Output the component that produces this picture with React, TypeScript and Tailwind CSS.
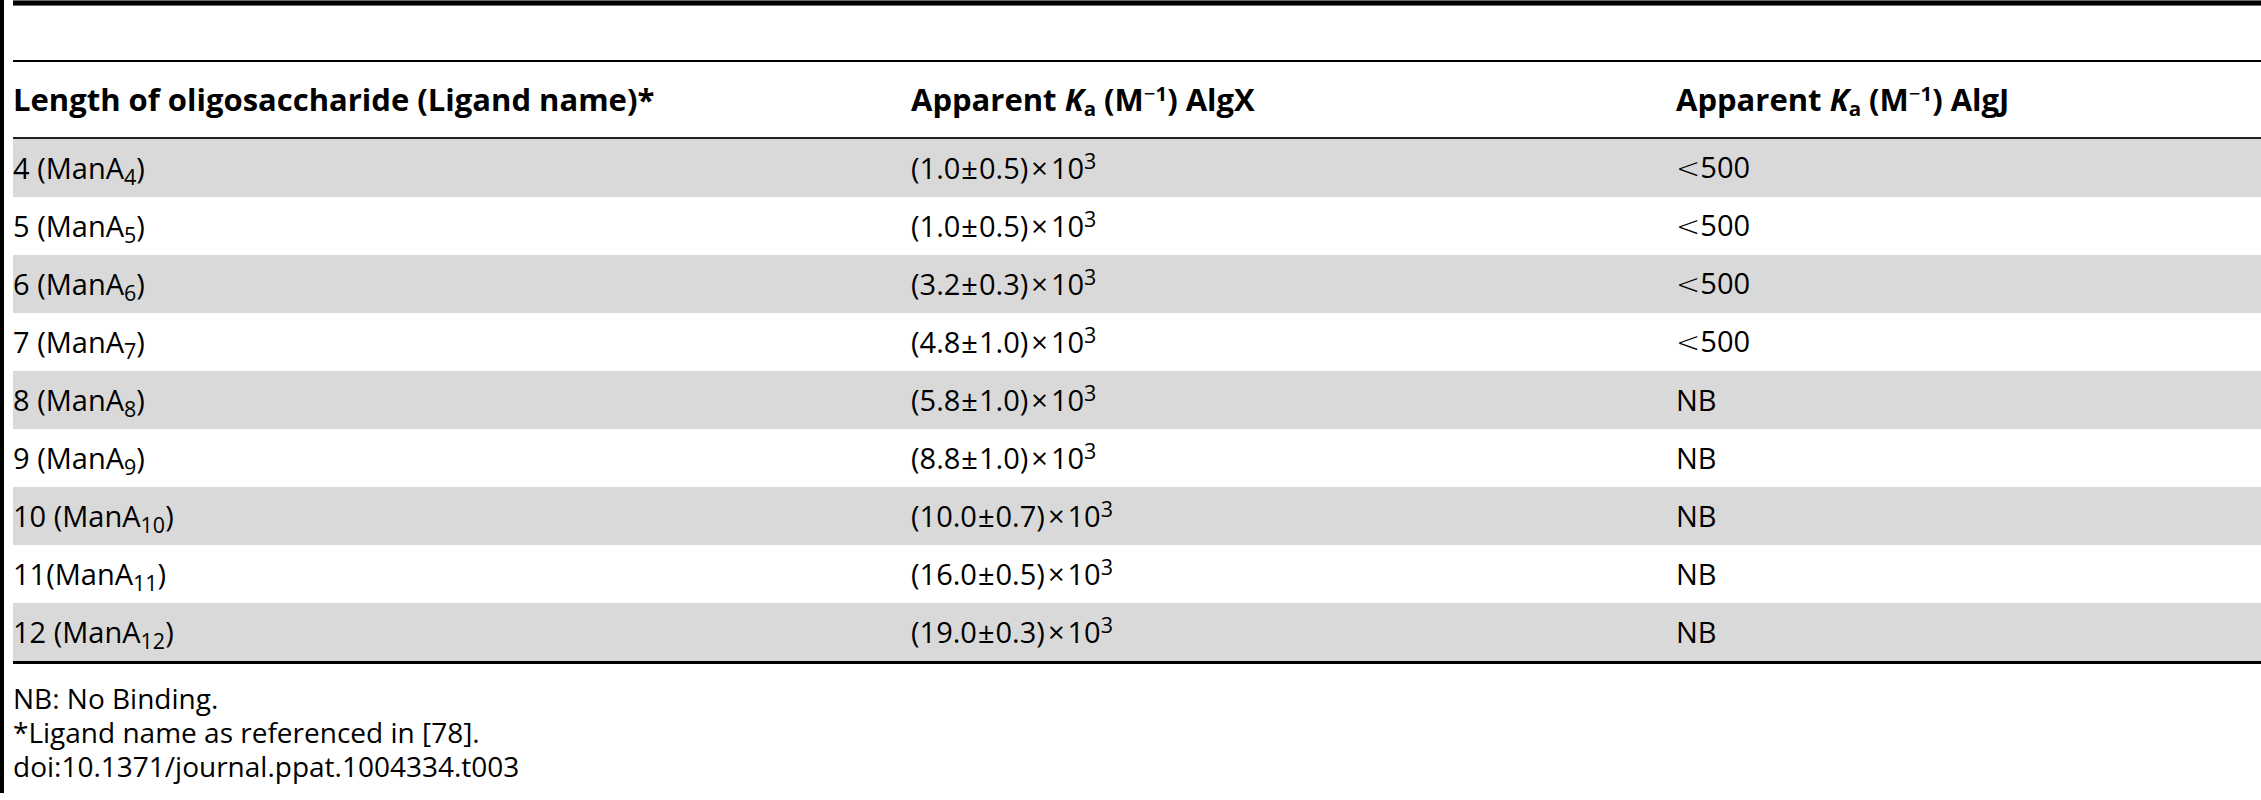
import React from "react";

// Tabela: wiązanie oligosacharydów przez AlgX / AlgJ
const ROWS = [
  { len: "4 ", sub: "4", algx: "1.0", err: "0.5", algj: "500" },
  { len: "5 ", sub: "5", algx: "1.0", err: "0.5", algj: "500" },
  { len: "6 ", sub: "6", algx: "3.2", err: "0.3", algj: "500" },
  { len: "7 ", sub: "7", algx: "4.8", err: "1.0", algj: "500" },
  { len: "8 ", sub: "8", algx: "5.8", err: "1.0", algj: "NB" },
  { len: "9 ", sub: "9", algx: "8.8", err: "1.0", algj: "NB" },
  { len: "10 ", sub: "10", algx: "10.0", err: "0.7", algj: "NB" },
  { len: "11", sub: "11", algx: "16.0", err: "0.5", algj: "NB" },
  { len: "12 ", sub: "12", algx: "19.0", err: "0.3", algj: "NB" },
];

const COLS = "grid grid-cols-[898px_765px_1fr] items-center";

function KaHeader({ enzyme }: { enzyme: string }) {
  return (
    <span>
      Apparent <i>K</i>
      <sub className="text-[0.66em]">a</sub> (M
      <sup className="text-[0.66em] font-normal">−</sup>
      <sup className="text-[0.66em]">1</sup>) {enzyme}
    </span>
  );
}

export default function App() {
  return (
    <div className="w-[2261px] h-[800px] bg-white flex text-black font-['Open_Sans',sans-serif]">
      <div className="w-[4px] h-[793px] bg-black shrink-0" />
      <div className="flex-1 pl-[9px]">
        <div className="h-[6px] bg-black border-y border-[#6b6b6b]" />
        <div className="h-[54px]" />
        <div className="h-[2px] bg-black" />
        <div className={`${COLS} h-[75px] text-[31px] font-bold`}>
          <span>Length of oligosaccharide (Ligand name)*</span>
          <KaHeader enzyme="AlgX" />
          <KaHeader enzyme="AlgJ" />
        </div>
        <div className="h-[2px] bg-[#222]" />
        {ROWS.map((r, i) => (
          <div
            key={r.sub}
            className={`${COLS} h-[58px] text-[29px] ${i % 2 === 0 ? "bg-[#d9d9d9]" : "bg-white"}`}
          >
            <span>
              {r.len}(ManA<sub className="text-[0.74em]">{r.sub}</sub>)
            </span>
            <span>
              ({r.algx}
              <span className="mx-[1px]">±</span>
              {r.err})<span className="mx-[3px]">×</span>10
              <sup className="text-[0.74em]">3</sup>
            </span>
            <span>
              {r.algj === "NB" ? (
                "NB"
              ) : (
                <>
                  <span className="font-['DejaVu_Sans',sans-serif] font-extralight">&lt;</span>
                  {r.algj}
                </>
              )}
            </span>
          </div>
        ))}
        <div className="h-[3px] bg-black" />
        <div className="mt-[17px] text-[28px] leading-[34px]">
          <div>NB: No Binding.</div>
          <div>*Ligand name as referenced in [78].</div>
          <div>doi:10.1371/journal.ppat.1004334.t003</div>
        </div>
      </div>
    </div>
  );
}
